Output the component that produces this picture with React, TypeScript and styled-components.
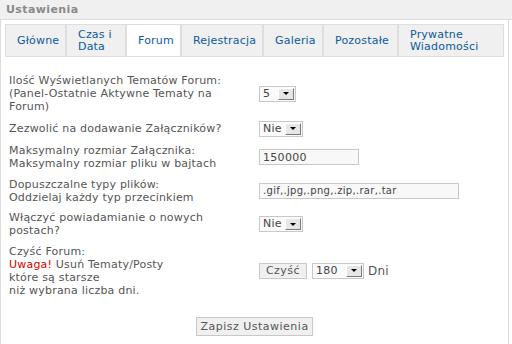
import { Fragment } from 'react';
import styled, { createGlobalStyle } from 'styled-components';

const GlobalStyle = createGlobalStyle`
	html, body {
		margin: 0;
		padding: 0;
		background: #fff;
	}
	body {
		font-family: 'DejaVu Sans', Verdana, sans-serif;
		font-size: 11px;
		letter-spacing: 0.2px;
		color: #555;
	}
`;

const tabs = [
	{ label: 'Główne', width: 61 },
	{ label: 'Czas i Data', width: 60 },
	{ label: 'Forum', width: 55, active: true },
	{ label: 'Rejestracja', width: 82 },
	{ label: 'Galeria', width: 60 },
	{ label: 'Pozostałe', width: 75 },
	{ label: 'Prywatne Wiadomości', width: 106 },
];

function Dropdown({ value, width }: { value: string; width: number }) {
	return (
		<SelectBox $w={width}>
			<SelectValue>{value}</SelectValue>
			<SelectArrow />
		</SelectBox>
	);
}

export default function App() {
	return (
		<Fragment>
			<GlobalStyle />
			<Page>
				<Header>
					<Title>Ustawienia</Title>
				</Header>
				<Body>
					<TabBar>
						{tabs.map((t) => (
							<Tab key={t.label} $w={t.width} $active={!!t.active}>
								{t.label}
							</Tab>
						))}
					</TabBar>

					<Form>
						<Label>
							Ilość Wyświetlanych Tematów Forum:
							<br />
							(Panel-Ostatnie Aktywne Tematy na
							<br />
							Forum)
						</Label>
						<Control>
							<Dropdown value='5' width={37} />
						</Control>

						<Label>Zezwolić na dodawanie Załączników?</Label>
						<Control>
							<Dropdown value='Nie' width={44} />
						</Control>

						<Label>
							Maksymalny rozmiar Załącznika:
							<br />
							Maksymalny rozmiar pliku w bajtach
						</Label>
						<Control>
							<TextInput $w={100} defaultValue='150000' />
						</Control>

						<Label>
							Dopuszczalne typy plików:
							<br />
							Oddzielaj każdy typ przecinkiem
						</Label>
						<Control>
							<TextInput $w={200} $small defaultValue='.gif,.jpg,.png,.zip,.rar,.tar' />
						</Control>

						<Label>
							Włączyć powiadamianie o nowych
							<br />
							postach?
						</Label>
						<Control>
							<Dropdown value='Nie' width={44} />
						</Control>

						<Label>
							Czyść Forum:
							<br />
							<Warning>Uwaga!</Warning> Usuń Tematy/Posty
							<br />
							które są starsze
							<br />
							niż wybrana liczba dni.
						</Label>
						<Control>
							<Button $w={48} $h={16}>Czyść</Button>
							<Dropdown value='180' width={52} />
							<Unit>Dni</Unit>
						</Control>
					</Form>

					<SaveRow>
						<Button $w={117} $h={19}>Zapisz Ustawienia</Button>
					</SaveRow>
				</Body>
			</Page>
		</Fragment>
	);
}

const Page = styled.div`
	width: 512px;
	height: 344px;
	overflow: hidden;
`;

const Header = styled.div`
	height: 19px;
	background: #f0f0f0;
	border-bottom: 1px solid #dcdcdc;
	display: flex;
	align-items: center;
	padding-left: 6px;
`;

const Title = styled.h1`
	margin: 0;
	font-size: 11px;
	font-weight: bold;
	color: #8a8a8a;
	letter-spacing: 0.4px;
`;

const Body = styled.div`
	width: 507px;
	border-left: 1px solid #dcdcdc;
	border-right: 1px solid #dcdcdc;
	padding: 4px 0 20px;
	min-height: 320px;
`;

const TabBar = styled.div`
	display: flex;
	margin-left: 4px;
	height: 33px;
`;

interface TabProps {
	$w: number;
	$active: boolean;
}

const Tab = styled.div<TabProps>`
	box-sizing: border-box;
	width: ${(p) => p.$w}px;
	height: 33px;
	display: flex;
	align-items: center;
	padding: 0 8px 0 11px;
	border: 1px solid #dedede;
	background: ${(p) => (p.$active ? '#fff' : '#f0f0f0')};
	color: #0d5a9e;
	line-height: 12px;
`;

const Form = styled.div`
	display: grid;
	grid-template-columns: 258px 1fr;
	row-gap: 7.5px;
	align-items: center;
	margin-top: 17px;
`;

const Label = styled.div`
	padding-left: 8px;
	line-height: 13px;
	white-space: nowrap;
	color: #555;
`;

const Warning = styled.span`
	color: #e00000;
`;

const Control = styled.div`
	display: flex;
	align-items: center;
	gap: 5px;
`;

const SelectBox = styled.div<{ $w: number }>`
	box-sizing: border-box;
	width: ${(p) => p.$w}px;
	height: 16px;
	border: 1px solid #c8c8c8;
	background: #fafafa;
	display: flex;
	align-items: center;
	justify-content: space-between;
	padding: 1px;
`;

const SelectValue = styled.span`
	padding-left: 2px;
	color: #444;
	line-height: 12px;
`;

const SelectArrow = styled.span`
	box-sizing: border-box;
	width: 16px;
	height: 12px;
	background: #e6e6e6;
	border-top: 1px solid #fff;
	border-left: 1px solid #fff;
	border-right: 1px solid #7a7a7a;
	border-bottom: 1px solid #7a7a7a;
	display: flex;
	align-items: center;
	justify-content: center;

	&::after {
		content: '';
		border-left: 3px solid transparent;
		border-right: 3px solid transparent;
		border-top: 3px solid #000;
	}
`;

const TextInput = styled.input<{ $w: number; $small?: boolean }>`
	box-sizing: border-box;
	width: ${(p) => p.$w}px;
	height: 16px;
	border: 1px solid #c8c8c8;
	background: #f8f8f8;
	padding: 0 3px;
	font-family: 'DejaVu Sans', Verdana, sans-serif;
	font-size: ${(p) => (p.$small ? 10 : 11)}px;
	letter-spacing: 0.3px;
	color: #444;
	outline: none;
`;

const Button = styled.button<{ $w: number; $h: number }>`
	box-sizing: border-box;
	width: ${(p) => p.$w}px;
	height: ${(p) => p.$h}px;
	border: 1px solid #c8c8c8;
	background: #f0f0f0;
	padding: 0;
	font-family: 'DejaVu Sans', Verdana, sans-serif;
	font-size: 11px;
	color: #555;
	letter-spacing: 0.5px;
`;

const Unit = styled.span`
	margin-left: -1px;
	font-size: 12px;
	color: #555;
`;

const SaveRow = styled.div`
	display: flex;
	justify-content: center;
	margin-top: 20px;
`;
